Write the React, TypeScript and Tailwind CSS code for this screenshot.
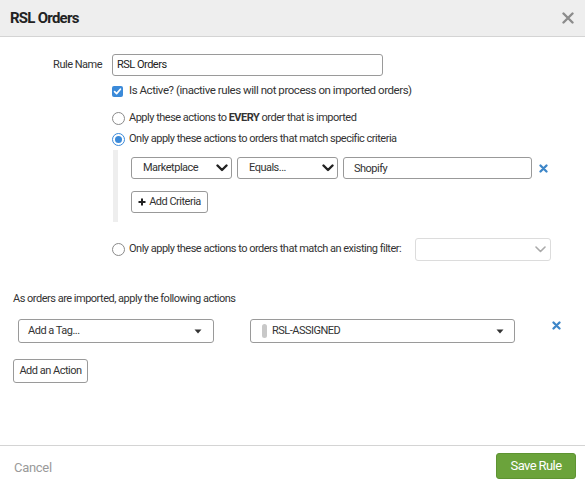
import React from "react";

const Chevron = () => (
  <svg width="12" height="8" viewBox="0 0 12 8" className="shrink-0">
    <polyline points="1.5,1.5 6,6 10.5,1.5" fill="none" stroke="#222" strokeWidth="2.4" strokeLinecap="round" strokeLinejoin="round" />
  </svg>
);

const Caret = () => (
  <svg width="8" height="5" viewBox="0 0 8 5" className="shrink-0">
    <polygon points="0.5,0.5 7.5,0.5 4,4.5" fill="#333" />
  </svg>
);

const BlueX = () => (
  <svg width="9" height="9" viewBox="0 0 9 9">
    <path d="M1.5 1.5 L7.5 7.5 M7.5 1.5 L1.5 7.5" stroke="#3d86c8" strokeWidth="2.3" strokeLinecap="round" />
  </svg>
);

const Radio = ({ checked }: { checked?: boolean }) =>
  checked ? (
    <span className="w-[13px] h-[13px] rounded-full border-[1.5px] border-[#3b8ad9] flex items-center justify-center bg-white shrink-0">
      <span className="w-[7px] h-[7px] rounded-full bg-[#3b8ad9]" />
    </span>
  ) : (
    <span className="w-[13px] h-[13px] rounded-full border-[1.5px] border-[#8a8a8a] bg-white shrink-0" />
  );

export default function App() {
  return (
    <div
      className="w-[585px] h-[480px] bg-white flex flex-col text-[#333] overflow-hidden"
      style={{ fontFamily: "Roboto, 'Liberation Sans', sans-serif" }}
    >
      {/* Header */}
      <div className="h-[37px] shrink-0 bg-[#eeeeee] border-b border-[#d4d4d4] flex items-center justify-between pl-[10px] pr-[11px]">
        <span className="text-[15px] font-bold text-[#222] tracking-[-0.75px]">RSL Orders</span>
        <svg width="12" height="12" viewBox="0 0 12 12">
          <path d="M1.5 1.5 L10.5 10.5 M10.5 1.5 L1.5 10.5" stroke="#8c8c8c" strokeWidth="2.4" strokeLinecap="round" />
        </svg>
      </div>

      {/* Body */}
      <div className="flex-1 flex flex-col pt-[17px] text-[11px] tracking-[-0.5px]">
        <div className="flex items-center">
          <label className="w-[102px] text-right">Rule Name</label>
          <div className="ml-[10px] w-[271px] h-[22px] border border-[#9a9a9a] rounded-[3px] flex items-center px-[4px] text-[#222]">
            RSL Orders
          </div>
        </div>

        <div className="ml-[112px] flex flex-col">
          <div className="mt-[7px] h-[16px] flex items-center gap-[6px] text-[11.5px] tracking-[-0.45px]">
            <span className="w-[11px] h-[11px] rounded-[2px] bg-[#3b8ad9] flex items-center justify-center shrink-0">
              <svg width="9" height="9" viewBox="0 0 9 9">
                <polyline points="1.6,4.7 3.6,6.6 7.4,2.2" fill="none" stroke="white" strokeWidth="1.7" strokeLinecap="round" strokeLinejoin="round" />
              </svg>
            </span>
            <span>Is Active? (inactive rules will not process on imported orders)</span>
          </div>

          <div className="mt-[11px] h-[16px] flex items-center gap-[4px]">
            <Radio />
            <span>
              Apply these actions to <b className="font-bold">EVERY</b> order that is imported
            </span>
          </div>

          <div className="mt-[5px] h-[16px] flex items-center gap-[4px]">
            <Radio checked />
            <span>Only apply these actions to orders that match specific criteria</span>
          </div>

          <div className="mt-[3px] flex">
            <div className="w-[5px] ml-[1px] bg-[#eeeeee] self-stretch" />
            <div className="pl-[13px] pt-[7px] pb-[9px] flex flex-col">
              <div className="flex items-center h-[22px]">
                <div className="w-[101px] h-[22px] border border-[#999] rounded-[3px] flex items-center justify-between pl-[11px] pr-[3px]">
                  <span>Marketplace</span>
                  <Chevron />
                </div>
                <div className="ml-[5px] w-[101px] h-[22px] border border-[#999] rounded-[3px] flex items-center justify-between pl-[11px] pr-[3px]">
                  <span>Equals...</span>
                  <Chevron />
                </div>
                <div className="ml-[5px] w-[189px] h-[22px] border border-[#999] rounded-[3px] flex items-center px-[10px] pt-[2px]">
                  Shopify
                </div>
                <span className="ml-[7px] flex items-center">
                  <BlueX />
                </span>
              </div>
              <div className="mt-[12px] w-[77px] h-[22px] border border-[#999] rounded-[3px] flex items-center justify-center gap-[3px]">
                <svg width="8" height="8" viewBox="0 0 8 8">
                  <path d="M4 0.5 V7.5 M0.5 4 H7.5" stroke="#222" strokeWidth="2" />
                </svg>
                <span>Add Criteria</span>
              </div>
            </div>
          </div>

          <div className="mt-[16px] w-[439px] flex items-center">
            <Radio />
            <span className="ml-[4px]">Only apply these actions to orders that match an existing filter:</span>
            <div className="ml-auto w-[136px] h-[23px] border border-[#dcdcdc] rounded-[3px] flex items-center justify-end pr-[4px]">
              <svg width="11" height="7" viewBox="0 0 11 7">
                <polyline points="1,1 5.5,5.5 10,1" fill="none" stroke="#aaa" strokeWidth="1.6" strokeLinecap="round" strokeLinejoin="round" />
              </svg>
            </div>
          </div>
        </div>

        <div className="mt-[30px] ml-[13px] h-[16px] flex items-center">
          As orders are imported, apply the following actions
        </div>

        <div className="mt-[12px] flex items-start">
          <div className="ml-[18px] w-[196px] h-[24px] border border-[#9a9a9a] rounded-[3px] flex items-center justify-between pl-[9px] pr-[11px]">
            <span>Add a Tag...</span>
            <Caret />
          </div>
          <div className="ml-[36px] w-[265px] h-[24px] border border-[#9a9a9a] rounded-[3px] flex items-center pl-[11px] pr-[10px]">
            <span className="w-[5px] h-[14px] rounded-full bg-[#c8c8c8] mr-[5px]" />
            <span>RSL-ASSIGNED</span>
            <span className="ml-auto flex">
              <Caret />
            </span>
          </div>
          <span className="ml-[37px] mt-[2px] flex">
            <BlueX />
          </span>
        </div>

        <div className="mt-[16px] ml-[13px] w-[75px] h-[24px] border border-[#9a9a9a] rounded-[3px] flex items-center justify-center">
          Add an Action
        </div>
      </div>

      {/* Footer */}
      <div className="h-[35px] shrink-0 border-t border-[#d4d4d4] flex items-start justify-between pl-[14px] pr-[9px] pt-[7px]">
        <span className="mt-[5px] text-[13px] tracking-[-0.3px] text-[#9a9a9a]">Cancel</span>
        <div className="w-[80px] h-[26px] bg-[#6ba33b] border border-[#5e9432] rounded-[3px] flex items-center justify-center text-[13px] tracking-[-0.6px] text-white">
          Save Rule
        </div>
      </div>
    </div>
  );
}
